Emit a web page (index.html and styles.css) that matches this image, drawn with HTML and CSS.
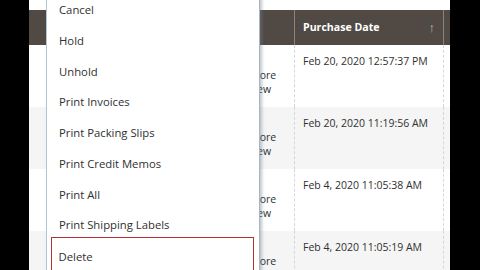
FILE: index.html
```html
<!DOCTYPE html>
<html lang="en">
<head>
    <meta charset="UTF-8">
    <title>Orders - Mass Actions</title>
    <link rel="stylesheet" href="styles.css">
</head>
<body>
    <div class="screen">
        <div class="grid">
            <div class="head">
                <div class="th"></div>
                <div class="th"></div>
                <div class="th th-date">Purchase Date <span class="sort">↑</span></div>
                <div class="th"></div>
            </div>
            <div class="row">
                <div class="td"></div>
                <div class="td store">Main Website<br>Main Website Store<br>Default Store View</div>
                <div class="td date">Feb 20, 2020 12:57:37 PM</div>
                <div class="td"></div>
            </div>
            <div class="row alt">
                <div class="td"></div>
                <div class="td store">Main Website<br>Main Website Store<br>Default Store View</div>
                <div class="td date">Feb 20, 2020 11:19:56 AM</div>
                <div class="td"></div>
            </div>
            <div class="row">
                <div class="td"></div>
                <div class="td store">Main Website<br>Main Website Store<br>Default Store View</div>
                <div class="td date">Feb 4, 2020 11:05:38 AM</div>
                <div class="td"></div>
            </div>
            <div class="row alt">
                <div class="td"></div>
                <div class="td store">Main Website<br>Main Website Store<br>Default Store View</div>
                <div class="td date">Feb 4, 2020 11:05:19 AM</div>
                <div class="td"></div>
            </div>
        </div>

        <!-- actions dropdown, opened over the grid -->
        <ul class="actions">
            <li>Cancel</li>
            <li>Hold</li>
            <li>Unhold</li>
            <li>Print Invoices</li>
            <li>Print Packing Slips</li>
            <li>Print Credit Memos</li>
            <li>Print All</li>
            <li>Print Shipping Labels</li>
            <li class="focused">Delete</li>
        </ul>
    </div>
</body>
</html>
```

FILE: styles.css
```css
* {
    margin: 0;
    padding: 0;
    box-sizing: border-box;
}

body {
    background: #000;
    font-family: 'Open Sans', 'Noto Sans', sans-serif;
    height: 270px;
    overflow: hidden;
}

.screen {
    position: relative;
    margin-left: 29px;
    width: 421px;
    height: 270px;
    background: #fff;
    overflow: hidden;
}

.grid {
    padding-top: 10px;
}

.head,
.row {
    display: grid;
    grid-template-columns: 132px 133px 149px 7px;
}

.head {
    height: 35px;
    background: #514943;
}

.th {
    border-left: 1px solid #8a827d;
    color: #fff;
    font-size: 10.6px;
    font-weight: 700;
    line-height: 34px;
    padding-left: 8px;
}

.th:first-child {
    border-left: none;
}

.th-date {
    display: flex;
    justify-content: space-between;
    padding-right: 8px;
}

.sort {
    color: #bdb7b3;
    font-weight: 400;
    font-size: 13px;
}

.row {
    height: 62px;
    background: #fff;
}

.row:first-of-type {
    height: 63px;
}

.row.alt {
    background: #f5f5f5;
}

.td {
    border-left: 1px dashed #d6d6d6;
    color: #303030;
    font-size: 10.5px;
    line-height: 14px;
    padding: 9px 0 0 8px;
}

.td:first-child {
    border-left: none;
}

.store {
    padding-left: 19px;
    white-space: nowrap;
    overflow: hidden;
}

.date {
    padding-top: 9px;
    white-space: nowrap;
}

.actions {
    position: absolute;
    left: 17px;
    top: -5px;
    width: 214px;
    height: 290px;
    list-style: none;
    background: #fff;
    border-left: 1px solid #b3c6d4;
    border-right: 1px solid #a9b6c0;
    box-shadow: 2px 0 3px rgba(110, 130, 150, 0.45);
}

.actions li {
    margin: 0 5px 0 4px;
    padding: 0 8px;
    height: 30.75px;
    line-height: 30.75px;
    color: #303030;
    font-size: 11.3px;
}

.actions li.focused {
    margin-top: -4px;
    padding-top: 4px;
    border: 1.5px solid #b03434;
    height: 40px;
    padding-left: 6.5px;
}
```
